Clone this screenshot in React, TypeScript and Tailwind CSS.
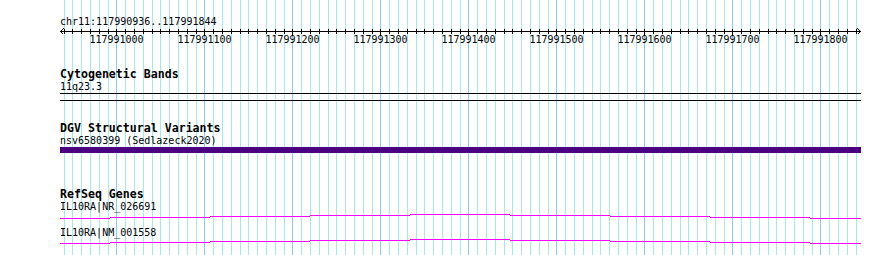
const BP0 = 117990936;
const PX = 0.8801;
const bx = (bp: number) => Math.round(60 + (bp - BP0) * PX);

const gridBps: number[] = [];
for (let bp = 117990940; bp <= 117991840; bp += 10) gridBps.push(bp);

const majors = [117991000, 117991100, 117991200, 117991300, 117991400, 117991500, 117991600, 117991700, 117991800];

// intron "hat" of the gene model: breakpoints and 1px lifts
const hatX = [60, 110, 210, 310, 410, 510, 610, 710, 810, 861];
const hatLift = [0, 1, 2, 3, 4, 3, 2, 1, 0];

const genes = [
  { name: "IL10RA|NR_026691", mt: "mt-0", base: 5 },
  { name: "IL10RA|NM_001558", mt: "mt-[7px]", base: 4 },
];

const mono = "font-['DejaVu_Sans_Mono','Liberation_Mono',monospace]";

function TrackTitle({ children, className = "" }: { children: string; className?: string }) {
  return <div className={`pl-[60px] text-[11.6px] leading-[12px] font-bold text-black ${className}`}>{children}</div>;
}

function Small({ children, className = "" }: { children: string; className?: string }) {
  return <div className={`pl-[60px] text-[10px] leading-[13px] text-black whitespace-pre ${className}`}>{children}</div>;
}

export default function App() {
  return (
    <div className={`relative w-[890px] h-[255px] overflow-hidden bg-white ${mono}`}>
      {/* grid behind everything */}
      <svg className="absolute inset-0" width={890} height={255} shapeRendering="crispEdges">
        {gridBps.map((bp) => (
          <line
            key={bp}
            x1={bx(bp) + 0.5}
            x2={bx(bp) + 0.5}
            y1={0}
            y2={255}
            stroke={bp % 100 === 0 ? "#86cdf3" : "#a6e8ef"}
            strokeWidth={1}
          />
        ))}
      </svg>

      <div className="relative flex flex-col pt-[15px]">
        {/* ruler */}
        <Small>chr11:117990936..117991844</Small>
        <div className="relative h-[20px]">
          <svg width={890} height={20} shapeRendering="crispEdges">
            <line x1={60} x2={861} y1={3.5} y2={3.5} stroke="#000" />
            {gridBps.map((bp) => (
              <line
                key={bp}
                x1={bx(bp) + 0.5}
                x2={bx(bp) + 0.5}
                y1={1}
                y2={bp % 100 === 0 ? 8 : 6}
                stroke="#000"
              />
            ))}
            <polyline points="63.5,0.5 60.5,3.5 63.5,6.5" fill="none" stroke="#000" />
            <polyline points="857.5,0.5 860.5,3.5 857.5,6.5" fill="none" stroke="#000" />
          </svg>
          {majors.map((bp) => (
            <span
              key={bp}
              className="absolute top-[5px] -translate-x-1/2 text-[10px] leading-[13px] text-black"
              style={{ left: bx(bp) + 0.5 }}
            >
              {bp}
            </span>
          ))}
        </div>

        {/* Cytogenetic Bands */}
        <TrackTitle className="mt-[20px]">Cytogenetic Bands</TrackTitle>
        <Small>11q23.3</Small>
        <svg width={890} height={8} shapeRendering="crispEdges">
          <line x1={60} x2={861} y1={0.5} y2={0.5} stroke="#000" />
          <line x1={60} x2={861} y1={7.5} y2={7.5} stroke="#000" />
        </svg>

        {/* DGV */}
        <TrackTitle className="mt-[21px]">DGV Structural Variants</TrackTitle>
        <Small>nsv6580399 (Sedlazeck2020)</Small>
        <div className="ml-[60px] w-[801px] h-[6px] bg-[#4b0082]" />

        {/* RefSeq */}
        <TrackTitle className="mt-[35px]">RefSeq Genes</TrackTitle>
        {genes.map((g) => (
          <div key={g.name} className={g.mt}>
            <Small>{g.name}</Small>
            <svg width={890} height={6} shapeRendering="crispEdges" className="block">
              {hatLift.map((lift, i) => (
                <rect
                  key={i}
                  x={hatX[i]}
                  y={g.base - lift}
                  width={hatX[i + 1] - hatX[i]}
                  height={1}
                  fill="#ff00ff"
                />
              ))}
            </svg>
          </div>
        ))}
      </div>
    </div>
  );
}
